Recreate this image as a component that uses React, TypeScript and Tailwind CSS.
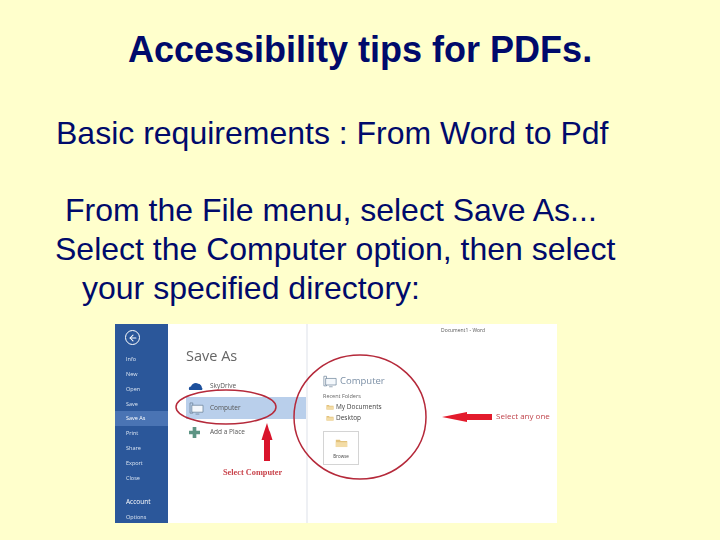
import { ArrowLeft } from "lucide-react";

const menu = ["Info", "New", "Open", "Save", "Save As", "Print", "Share", "Export", "Close"];

function MonitorIcon({ className }: { className: string }) {
  return (
    <svg viewBox="0 0 16 14" className={className} fill="none" stroke="#6b8299" strokeWidth="0.8">
      <path d="M1 1h3v11H1z" />
      <path d="M3 3.500h12v7.500H3z" fill="#f4f8fc" />
      <path d="M7 13h4" />
    </svg>
  );
}

function FolderIcon({ className }: { className: string }) {
  return (
    <svg viewBox="0 0 16 12" className={className}>
      <path d="M1 2h5l1 1.500h8V11H1z" fill="#e3c27c" />
      <path d="M1 5h14v6H1z" fill="#f3dca6" />
    </svg>
  );
}

function Backstage() {
  return (
    <div className="relative ml-[115px] mt-[16px] flex h-[199px] w-[442px] bg-white font-['Open_Sans',sans-serif] blur-[0.4px]">
      {/* menu lateral */}
      <div className="flex w-[53px] shrink-0 flex-col bg-[#2b579a] text-[5.500px] text-[#dbe5f2]">
        <div className="mb-[7px] ml-[10px] mt-[6px] flex h-[15px] w-[15px] items-center justify-center rounded-full border border-white">
          <ArrowLeft className="h-[10px] w-[10px] text-white" strokeWidth={2.500} />
        </div>
        {menu.map(item => (
          <div
            key={item}
            className={`flex h-[14.800px] items-center pl-[11px] ${item === "Save As" ? "bg-[#4a74b4] text-white" : ""}`}
          >
            {item}
          </div>
        ))}
        <div className="ml-[11px] mt-[12px] text-[6.500px] leading-[10px] text-white">Account</div>
        <div className="ml-[11px] mt-[6px] leading-[8px]">Options</div>
      </div>

      {/* columna Save As */}
      <div className="w-[140px] shrink-0 border-r-2 border-[#eef0f4] pl-[18px] pt-[22px]">
        <div className="text-[14.500px] leading-[20px] text-[#666666]">Save As</div>
        <div className="mt-[14px] flex h-[12px] items-center text-[6.500px] text-[#555555]">
          <svg viewBox="0 0 16 10" className="ml-[2px] h-[9px] w-[15px]">
            <path d="M1 9c-1-2 0-4 2-4 1-3 5-5 8-3 2 0 4 2 4 4 1 1 1 2 0 3z" fill="#1c4f9c" />
          </svg>
          <span className="ml-[7px]">SkyDrive</span>
        </div>
        <div className="mt-[5px] flex h-[22px] items-center bg-[#b9cfeb] pl-[3px] text-[6.500px] text-[#555555]">
          <MonitorIcon className="h-[13px] w-[15px]" />
          <span className="ml-[6px]">Computer</span>
        </div>
        <div className="mt-[7px] flex h-[12px] items-center text-[6.500px] text-[#555555]">
          <svg viewBox="0 0 12 12" className="ml-[3px] h-[11px] w-[11px]">
            <path d="M4 0h4v4h4v4H8v4H4V8H0V4h4z" fill="#5d9484" />
          </svg>
          <span className="ml-[10px]">Add a Place</span>
        </div>
        <div className="ml-[37px] mt-[30px] whitespace-nowrap font-['Liberation_Serif',serif] text-[8.300px] font-bold leading-[10px] text-[#c9444c]">
          Select Computer
        </div>
      </div>

      {/* columna Computer */}
      <div className="min-w-0 flex-1 pl-[15px] pt-[3px]">
        <div className="ml-[118px] whitespace-nowrap text-[5px] leading-[6px] text-[#555555]">Document1 - Word</div>
        <div className="mt-[41px] flex h-[14px] items-center text-[9.500px] text-[#7c90a6]">
          <MonitorIcon className="h-[13px] w-[14px]" />
          <span className="ml-[3px]">Computer</span>
        </div>
        <div className="mt-[4px] text-[5.500px] leading-[8px] text-[#666666]">Recent Folders</div>
        <div className="ml-[3px] mt-[1px] flex h-[11px] items-center text-[6.500px] text-[#444444]">
          <FolderIcon className="h-[6px] w-[8px]" />
          <span className="ml-[2px]">My Documents</span>
        </div>
        <div className="ml-[3px] flex h-[11px] items-center text-[6.500px] text-[#444444]">
          <FolderIcon className="h-[6px] w-[8px]" />
          <span className="ml-[2px]">Desktop</span>
        </div>
        <div className="mt-[8px] flex h-[34px] w-[36px] flex-col items-center border border-[#d4d4d4] pt-[6px] text-[4.500px] text-[#444444]">
          <FolderIcon className="h-[10px] w-[13px]" />
          <span className="mt-[5px]">Browse</span>
        </div>
      </div>

      {/* anotaciones */}
      <svg className="pointer-events-none absolute left-0 top-0 h-[199px] w-[442px]" viewBox="0 0 442 199" fill="none">
        <ellipse cx="111" cy="83" rx="50" ry="17" stroke="#b5293a" strokeWidth="1.500" />
        <ellipse cx="245" cy="93" rx="66" ry="62" stroke="#b5293a" strokeWidth="1.500" />
        <path d="M152 99l2 7 1 2 2.500 8H155v21h-6v-21h-2.500l2.500-8z" fill="#d9142b" />
        <path d="M327 93l25-5v2h25v6h-25v2z" fill="#e31b2c" />
      </svg>
      <div className="absolute left-[381px] top-[86px] whitespace-nowrap text-[8px] leading-[11px] text-[#c0444c]">Select any one</div>
    </div>
  );
}

export default function App() {
  return (
    <div className="h-[540px] w-[720px] overflow-hidden bg-[#ffffcc] font-['Liberation_Sans',sans-serif] text-[#000a6b]">
      <h1 className="ml-[128px] pt-[30px] text-[36px] font-bold leading-[40px]">Accessibility tips for PDFs.</h1>
      <p className="ml-[56px] mt-[44px] text-[32px] leading-[38px]">Basic requirements : From Word to Pdf</p>
      <div className="mt-[39px] text-[32px] leading-[39px]">
        <p className="ml-[65px]">From the File menu, select Save As...</p>
        <p className="ml-[55px]">Select the Computer option, then select</p>
        <p className="ml-[82px]">your specified directory:</p>
      </div>
      <Backstage />
    </div>
  );
}
